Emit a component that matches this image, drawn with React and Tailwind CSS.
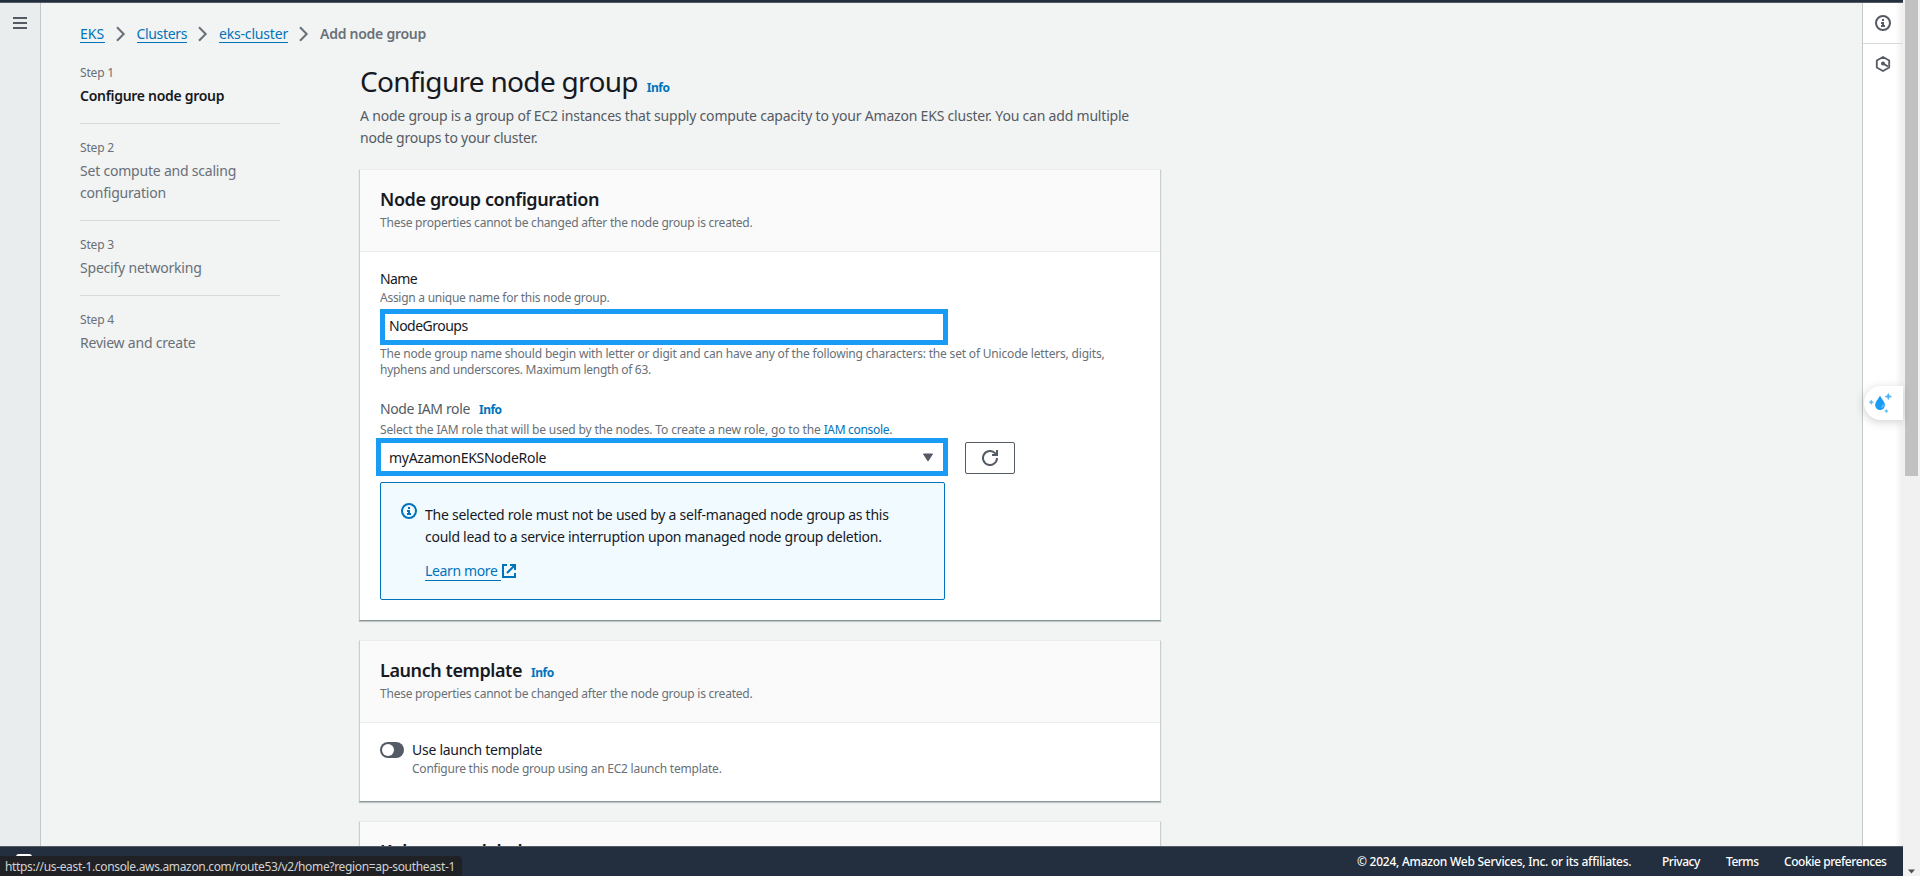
import React from "react";

function Chevron() {
  return (
    <svg className="mx-[10px] h-4 w-[12px] shrink-0" viewBox="0 0 12 16" fill="none" stroke="#687078" strokeWidth="2">
      <path d="M2 1.200 8.700 8l-6.700 6.800" />
    </svg>
  );
}

function InfoIcon({ className }) {
  return (
    <svg className={className} viewBox="0 0 16 16" fill="none" stroke="currentColor" strokeWidth="2">
      <circle cx="8" cy="8" r="7" />
      <path d="M8 11V8H6M10 11H6" />
      <path d="M8 6V4" />
    </svg>
  );
}

function Crumb({ children, className }) {
  return (
    <a className={`border-b border-[#0073bb] leading-[17px] whitespace-nowrap text-[#0073bb] ${className}`}>{children}</a>
  );
}

function Step({ number, title, active, last, first }) {
  return (
    <li className={`${first ? "" : "pt-4"} ${last ? "" : "border-b border-[#d5dbdb] pb-4"}`}>
      <div className="text-[12px] leading-[16px] tracking-[-0.18px] text-[#687078]">Step {number}</div>
      <div
        className={
          active
            ? "mt-1 leading-[22px] font-semibold tracking-[-0.29px] text-[#16191f]"
            : "mt-1 leading-[22px] tracking-[-0.21px] text-[#687078]"
        }
      >
        {title}
      </div>
    </li>
  );
}

function Info({ className }) {
  return <a className={`text-[12px] font-bold tracking-[-0.5px] text-[#0073bb] ${className}`}>Info</a>;
}

function Card({ title, titleClass, info, sub, className, children }) {
  return (
    <section
      className={`-mx-px shrink-0 border-x border-t border-x-[#c9cfcf] border-t-[#eaeded] border-b border-b-[#879596] bg-white shadow-[0_1px_1px_0_rgba(0,28,36,0.2)] ${className}`}
    >
      <header className="h-[82px] border-b border-[#eaeded] bg-[#fafafa] px-5 pt-[18px]">
        <div className="flex h-[22px] items-baseline leading-[22px] text-[#16191f]">
          <h2 className={`text-[18px] font-semibold ${titleClass}`}>{title}</h2>
          {info && <Info className="ml-[9px]" />}
        </div>
        <p className="mt-[4px] text-[12px] leading-[18px] tracking-[-0.23px] text-[#687078]">{sub}</p>
      </header>
      {children}
    </section>
  );
}

export default function App() {
  return (
    <div className="flex h-[876px] w-[1920px] overflow-hidden bg-[#f2f3f3] font-['Noto_Sans',sans-serif] text-[14px]">
      <div className="relative flex w-[1903px] flex-col">
        <div className="h-[3px] shrink-0 border-b border-[#545b64] bg-[#232f3e]" />

        <div className="flex min-h-0 flex-1">
          <nav className="flex w-[41px] shrink-0 justify-center border-r border-[#c3c9c9] bg-[#eaeded] pt-[14px]">
            <svg className="h-[13px] w-[14px]" viewBox="0 0 14 13" fill="#545b64">
              <path d="M0 0h14v2H0zM0 5h14v2H0zM0 10h14v2H0z" />
            </svg>
          </nav>

          <main className="flex min-w-0 flex-1 flex-col overflow-hidden pt-[20px] pl-[39px]">
            <div className="flex h-[21px] shrink-0 items-center pt-px">
              <Crumb className="w-[24.5px]">EKS</Crumb>
              <Chevron />
              <Crumb className="w-[50.5px] tracking-[-0.34px]">Clusters</Crumb>
              <Chevron />
              <Crumb className="w-[69px] tracking-[-0.18px]">eks-cluster</Crumb>
              <Chevron />
              <span className="pb-px leading-[17px] font-semibold tracking-[-0.26px] text-[#687078]">Add node group</span>
            </div>

            <div className="flex min-h-0 flex-1">
              <ol className="w-[200px] shrink-0 pt-[21px]">
                <Step number={1} title="Configure node group" active first />
                <Step number={2} title="Set compute and scaling configuration" />
                <Step number={3} title="Specify networking" />
                <Step number={4} title="Review and create" last />
              </ol>

              <div className="ml-[80px] flex w-[800px] flex-col pt-[19px]">
                <div className="flex h-[36px] items-baseline leading-[36px] text-[#16191f]">
                  <h1 className="text-[28px] tracking-[-0.69px]">Configure node group</h1>
                  <Info className="ml-[9px]" />
                </div>
                <p className="mt-[6px] leading-[22px] tracking-[-0.2px] text-[#545b64]">
                  A node group is a group of EC2 instances that supply compute capacity to your Amazon EKS cluster. You
                  can add multiple
                  <br />
                  <span className="tracking-[-0.24px]">node groups to your cluster.</span>
                </p>

                <Card
                  title="Node group configuration"
                  titleClass="tracking-[-0.385px]"
                  sub="These properties cannot be changed after the node group is created."
                  className="mt-[20px] h-[452px]"
                >
                  <div className="flex flex-col px-5 pt-[16px]">
                    <label className="leading-[22px] tracking-[-0.62px] text-[#16191f]">Name</label>
                    <p className="text-[12px] leading-[16px] tracking-[-0.265px] text-[#687078]">
                      Assign a unique name for this node group.
                    </p>
                    <div className="mt-[3px] flex h-[36px] w-[568px] items-center border-[5px] border-[#1a9cf5] bg-white pb-[3px] pl-[4px] tracking-[-0.51px] text-[#16191f]">
                      NodeGroups
                    </div>
                    <p className="mt-[1px] text-[12px] leading-[16px] whitespace-nowrap text-[#687078]">
                      <span className="tracking-[-0.185px]">
                        The node group name should begin with letter or digit and can have any of the following
                        characters: the set of Unicode letters, digits,
                      </span>
                      <br />
                      <span className="tracking-[-0.268px]">hyphens and underscores. Maximum length of 63.</span>
                    </p>
                    <div className="mt-[20px] flex h-[22px] items-baseline leading-[22px] text-[#545b64]">
                      <span className="tracking-[-0.37px]">Node IAM role</span>
                      <Info className="ml-[9px]" />
                    </div>
                    <p className="mt-[2px] text-[12px] leading-[16px] tracking-[-0.15px] text-[#687078]">
                      Select the IAM role that will be used by the nodes. To create a new role, go to the{" "}
                      <a className="tracking-[-0.32px] text-[#0073bb]">IAM console</a>.
                    </p>
                    <div className="-ml-[4px] flex items-start">
                      <div className="flex h-[38px] w-[572px] items-center justify-between border-[5px] border-[#1a9cf5] bg-white pr-[10px] pl-[8px] text-[#16191f]">
                        <span className="tracking-[-0.27px]">myAzamonEKSNodeRole</span>
                        <svg className="h-[9px] w-[10px]" viewBox="0 0 10 9" fill="#545b64" stroke="#545b64" strokeLinejoin="round">
                          <path d="M.5 1h9L5 8z" />
                        </svg>
                      </div>
                      <button className="mt-[4px] ml-[17px] flex h-[32px] w-[50px] items-center justify-center rounded-[2px] border border-[#545b64] bg-white">
                        <svg className="h-4 w-4" viewBox="0 0 16 16" fill="none" stroke="#545b64" strokeWidth="2">
                          <path d="M15 8a7 7 0 1 1-2-4.900L14.500 4.800" />
                          <path d="M10 5h5V0" />
                        </svg>
                      </button>
                    </div>
                    <div className="mt-[6px] flex h-[118px] w-[565px] rounded-[2px] border border-[#0073bb] bg-[#f1faff] pt-[20px] pl-[20px]">
                      <InfoIcon className="h-4 w-4 text-[#0073bb]" />
                      <div className="ml-[8px] pt-px leading-[22px] whitespace-nowrap text-[#16191f]">
                        <p className="tracking-[-0.245px]">
                          The selected role must not be used by a self-managed node group as this
                        </p>
                        <p className="tracking-[-0.267px]">
                          could lead to a service interruption upon managed node group deletion.
                        </p>
                        <div className="mt-[13px] flex items-start text-[#0073bb]">
                          <a className="w-[76px] border-b border-[#0073bb] leading-[19px] tracking-[-0.36px]">
                            Learn more
                          </a>
                          <svg className="mt-[3px] ml-px h-[14px] w-[14px]" viewBox="0 0 14 14" fill="none" stroke="currentColor" strokeWidth="2">
                            <path d="M5 1H1v12h12V9" />
                            <path d="M8 1h5v5M13 1 5 9" />
                          </svg>
                        </div>
                      </div>
                    </div>
                  </div>
                </Card>

                <Card
                  title="Launch template"
                  titleClass="tracking-[-0.42px]"
                  info
                  sub="These properties cannot be changed after the node group is created."
                  className="mt-[19px] h-[162px]"
                >
                  <div className="flex px-5 pt-[16px]">
                    <span className="mt-[3px] flex h-[16px] w-[24px] items-center rounded-full bg-[#545b64] pl-[2px]">
                      <span className="h-[12px] w-[12px] rounded-full bg-white" />
                    </span>
                    <div className="ml-[8px]">
                      <div className="leading-[22px] tracking-[-0.27px] text-[#16191f]">Use launch template</div>
                      <div className="text-[12px] leading-[16px] tracking-[-0.23px] text-[#687078]">
                        Configure this node group using an EC2 launch template.
                      </div>
                    </div>
                  </div>
                </Card>

                <Card
                  title="Kubernetes labels"
                  titleClass="tracking-[-0.4px]"
                  className="mt-[19px] h-[162px]"
                />
              </div>
            </div>
          </main>

          <aside className="flex w-[41px] shrink-0 flex-col border-l border-[#c3c9c9] bg-linear-to-r from-white from-80% to-[#eeeeee] text-[#545b64]">
            <div className="flex h-[41px] items-center justify-center border-b border-[#d5dbdb]">
              <InfoIcon className="h-4 w-4" />
            </div>
            <div className="flex h-[40px] items-center justify-center">
              <svg className="h-4 w-4" viewBox="0 0 16 16" fill="none" stroke="currentColor" strokeWidth="1.8">
                <path d="m8 1 6.200 3.500v7L8 15l-6.200-3.500v-7z" strokeLinejoin="round" />
                <circle cx="8" cy="7.500" r="2" fill="currentColor" stroke="none" />
                <path d="m8 7.500 5 3" strokeWidth="2" />
              </svg>
            </div>
          </aside>
        </div>

        <footer className="flex h-[30px] shrink-0 items-center border-t border-[#545b64] bg-[#232f3e] pt-px pl-[1357px] text-[12px] font-medium whitespace-nowrap text-white">
          <span className="w-[305px] tracking-[-0.25px]">© 2024, Amazon Web Services, Inc. or its affiliates.</span>
          <span className="w-[64px] tracking-[-0.45px]">Privacy</span>
          <span className="w-[58px] tracking-[-0.5px]">Terms</span>
          <span className="tracking-[-0.44px]">Cookie preferences</span>
        </footer>

        <div className="absolute bottom-[19px] left-[16px] h-[3px] w-4 rounded-t-[3px] bg-white" />
        <div className="absolute bottom-0 left-0 h-[20px] w-[462px] rounded-tr-[4px] bg-[#202124] pt-px pl-[5px] text-[12px] leading-[20px] tracking-[-0.338px] whitespace-nowrap text-[#d0d3d6]">
          https://us-east-1.console.aws.amazon.com/route53/v2/home?region=ap-southeast-1
        </div>

        <div className="absolute top-[386px] right-0 flex h-[34px] w-[39px] items-center rounded-l-full bg-white pl-[5px] shadow-[-1px_2px_10px_rgba(0,0,0,0.18)]">
          <svg className="h-[22px] w-[24px]" viewBox="0 0 24 22">
            <path d="M11 3.500c2 4 4.900 6.200 4.900 9.700a4.800 4.800 0 0 1-9.700 0C6.200 9.700 9 7.500 11 3.500z" fill="#1a9cf5" />
            <path d="M12.500 15.500c1.200-.5 1.800-1.500 1.600-2.800" stroke="#bfe3fb" fill="none" />
            <path d="M19.300 1.300l.9 2.300 2.500.9-2.500.9-.9 2.300-.9-2.300-2.500-.9 2.500-.9zM2.300 8l.6 1.600 1.700.6-1.700.6-.6 1.600-.6-1.600L0 10.200l1.700-.6zM17.300 17.500l.5 1.100 1.200.5-1.200.5-.5 1.100-.5-1.100-1.200-.5 1.200-.5z" fill="#4bb3f7" stroke="#4bb3f7" strokeWidth=".5" />
          </svg>
        </div>
      </div>

      <div className="flex w-[17px] flex-col items-center justify-between bg-[#f1f1f1]">
        <div className="h-[476px] w-[13px] bg-[#c1c1c1]" />
        <svg className="mb-[2px] h-[5px] w-[7px]" viewBox="0 0 7 5" fill="#505050">
          <path d="M0 .5h7L3.500 4.500z" />
        </svg>
      </div>
    </div>
  );
}
